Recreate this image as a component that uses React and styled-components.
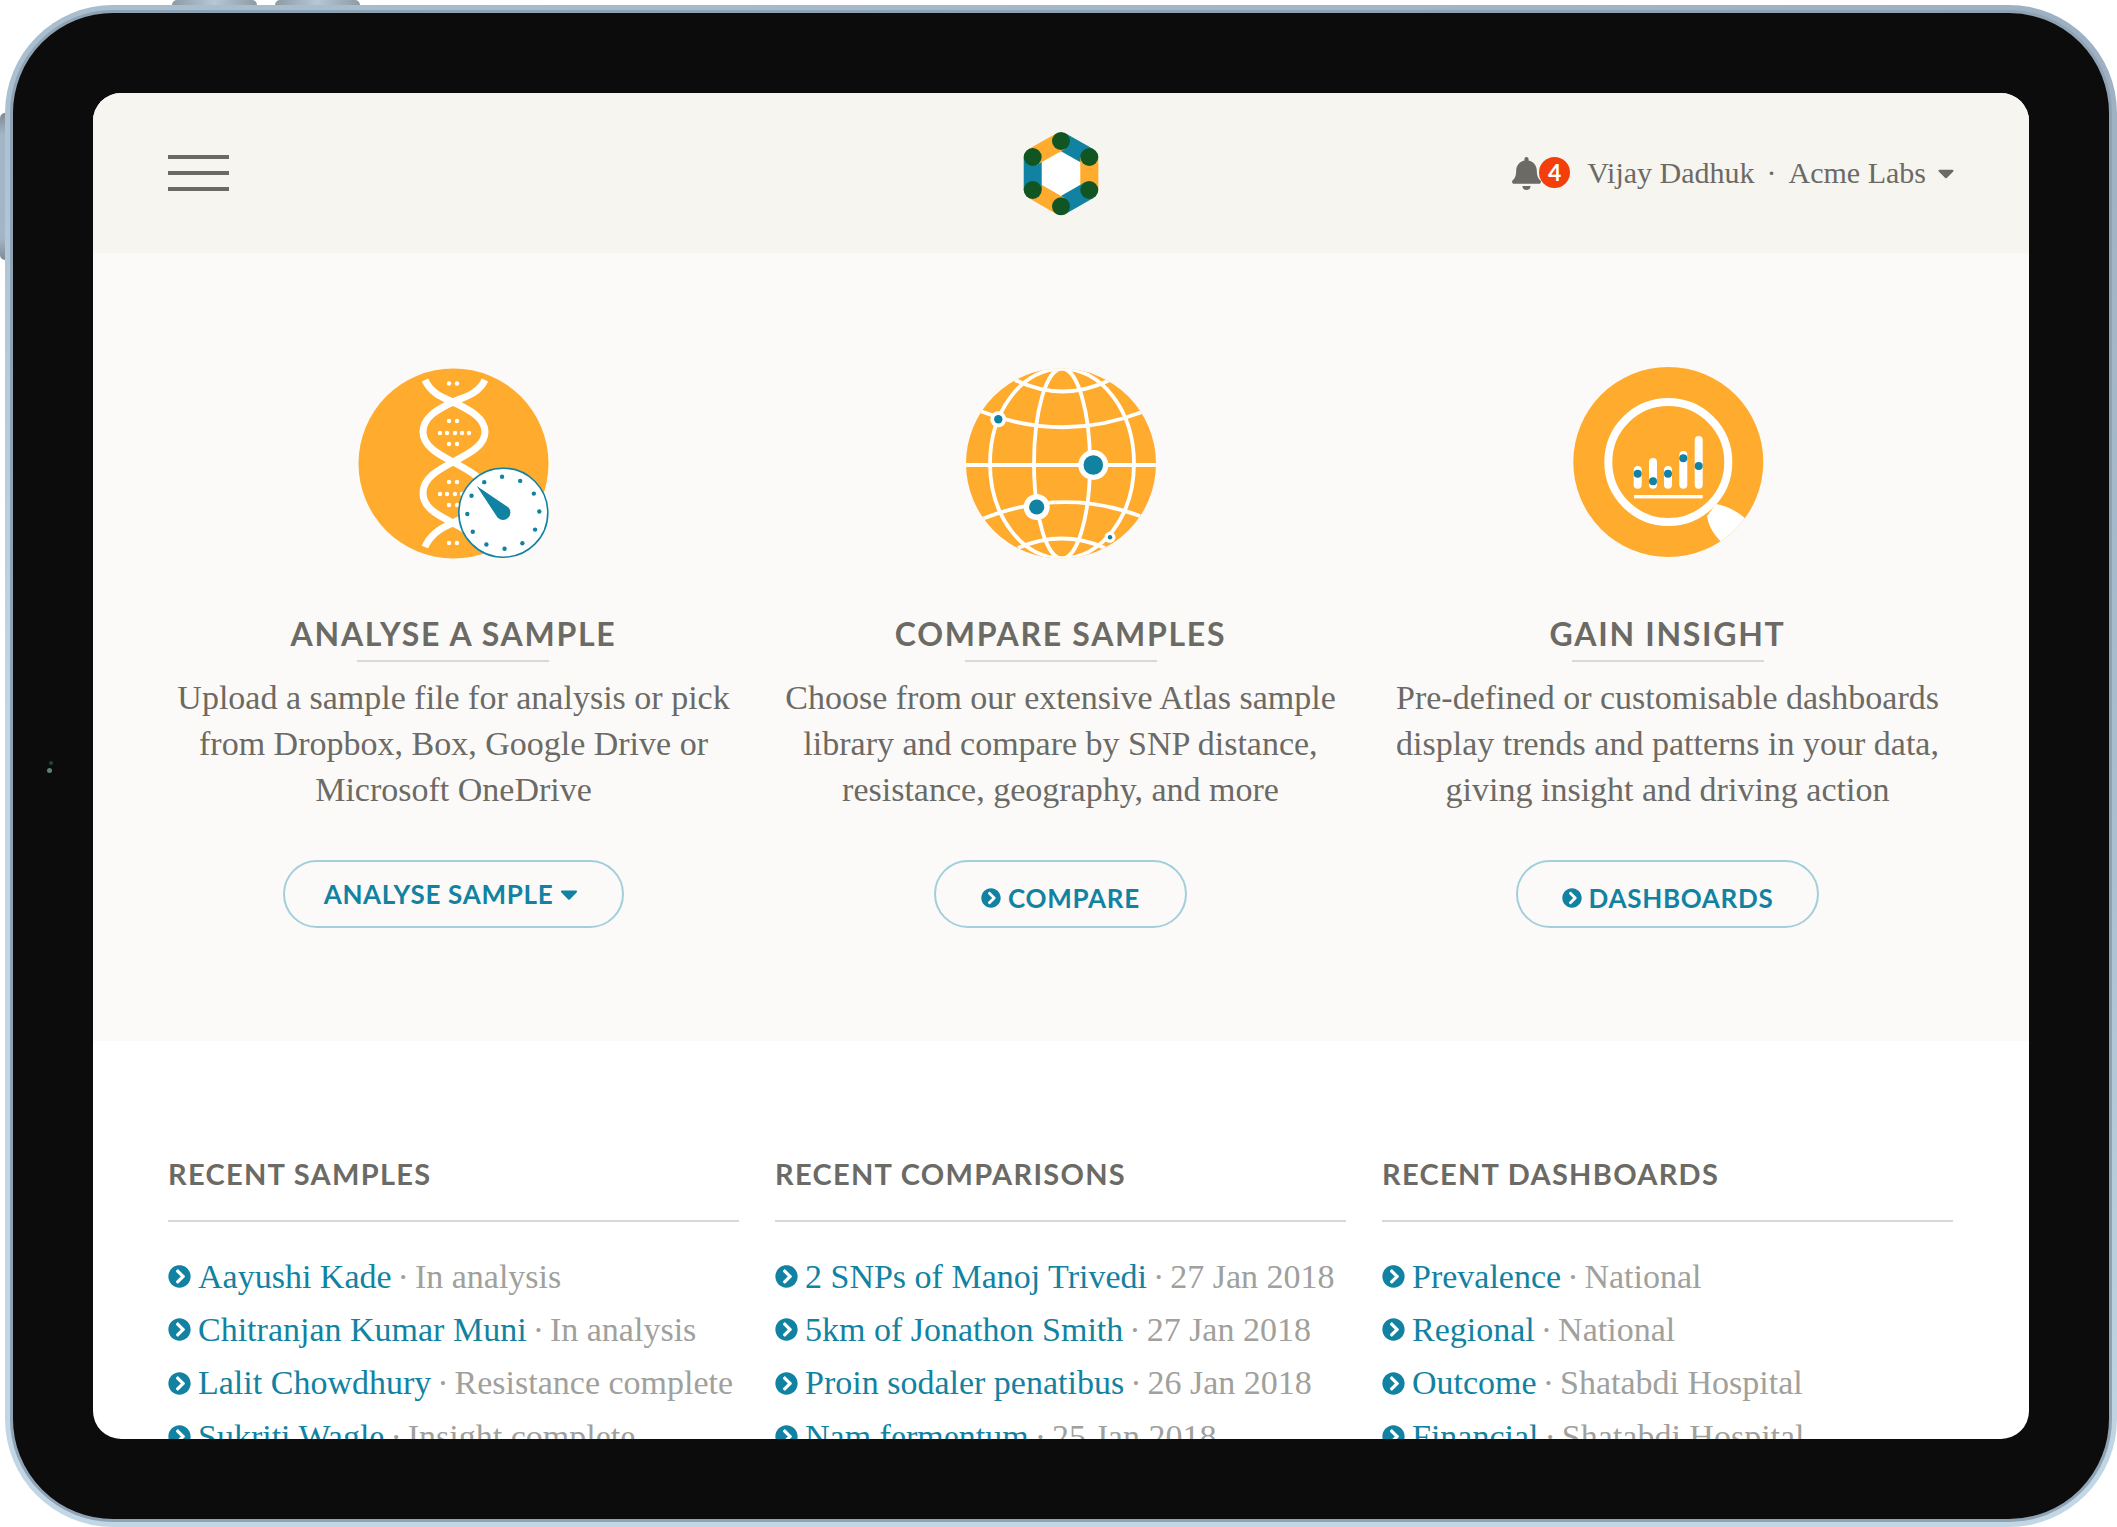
import React from 'react'
import styled, { createGlobalStyle } from 'styled-components'
import { FaBell, FaCaretDown, FaChevronCircleRight } from 'react-icons/fa'

const TEAL = '#1282a2'
const ORANGE = '#ffab2e'
const GREEN = '#115622'

const GlobalStyle = createGlobalStyle`
    html, body {
        margin: 0;
        padding: 0;
        background: #fff;
    }
    body {
        width: 2117px;
        height: 1527px;
        overflow: hidden;
        font-family: 'Liberation Serif', serif;
        color: #6b6a65;
    }
`

const Stage = styled.div`
    position: relative;
    width: 2117px;
    height: 1527px;
    padding: 5px 0 0 5px;
    box-sizing: border-box;
`
const TopKey = styled.div`
    position: absolute;
    top: 0;
    left: ${props => props.left}px;
    width: 85px;
    height: 6px;
    border-radius: 5px 5px 0 0;
    background: linear-gradient(90deg, #8d9aa5, #b5c8d4 50%, #8d9aa5);
`
const SideKey = styled.div`
    position: absolute;
    left: 0;
    top: 113px;
    width: 6px;
    height: 147px;
    border-radius: 5px 0 0 5px;
    background: linear-gradient(180deg, #7f8a92, #a3b6c6 15%, #a3b6c6 85%, #7f8a92);
`
const Frame = styled.div`
    position: relative;
    width: 2112px;
    height: 1522px;
    box-sizing: border-box;
    padding: 5px;
    border-radius: 108px;
    background: linear-gradient(200deg, #9db0c2 0%, #a9bfd0 35%, #c2d7e5 65%, #c2d7e5 100%);
`
const Bezel = styled.div`
    width: 100%;
    height: 100%;
    box-sizing: border-box;
    padding: 80px;
    border: 3px solid #8fa3b5;
    border-radius: 103px;
    background: #0c0c0c;
`
const CameraSpeck = styled.span`
    position: absolute;
    left: ${props => props.left}px;
    top: ${props => props.top}px;
    width: ${props => props.size}px;
    height: ${props => props.size}px;
    border-radius: 50%;
    background: ${props => props.color};
`
const Screen = styled.div`
    height: 100%;
    overflow: hidden;
    border-radius: 28px;
    background: #fff;
`
const Header = styled.header`
    height: 160px;
    padding: 0 75px;
    display: grid;
    grid-template-columns: 1fr auto 1fr;
    align-items: center;
    background: #f6f5f0;
`
const Burger = styled.div`
    width: 61px;
    display: flex;
    flex-direction: column;
    gap: 12px;
`
const BurgerBar = styled.span`
    display: block;
    height: 4px;
    background: #6b6a65;
`
const UserArea = styled.div`
    display: flex;
    align-items: center;
    justify-content: flex-end;
    font-size: 30px;
`
const BellWrap = styled.div`
    position: relative;
    width: 60px;
    height: 36px;
    margin-right: 17px;
    color: #6b6a65;
    font-size: 33px;
    display: flex;
    align-items: center;
`
const Badge = styled.span`
    position: absolute;
    right: 0;
    top: 2px;
    width: 31px;
    height: 31px;
    border-radius: 50%;
    background: #f43f0c;
    color: #fff;
    font: 700 23px/31px 'Lato', sans-serif;
    text-align: center;
`
const Sep = styled.span`
    margin: 0 12px;
`
const Caret = styled.span`
    display: flex;
    margin: 0 -5px 0 7px;
    font-size: 26px;
    color: #6b6a65;
`
const Hero = styled.section`
    height: 788px;
    box-sizing: border-box;
    padding: 115px 75px 0;
    display: grid;
    grid-template-columns: repeat(3, 571px);
    gap: 36px;
    background: #fbfaf8;
`
const Feature = styled.div`
    display: flex;
    flex-direction: column;
    align-items: center;
    text-align: center;
`
const IconSlot = styled.div`
    width: 200px;
    height: 200px;
    margin-bottom: 46px;
    svg {
        display: block;
        overflow: visible;
    }
`
const FeatureTitle = styled.h2`
    margin: 0;
    padding-bottom: 8px;
    font: 700 32px/40px 'Lato', sans-serif;
    letter-spacing: 1.7px;
    color: #6b6a65;
    position: relative;
    &::after {
        content: '';
        position: absolute;
        left: 50%;
        bottom: 0;
        width: 192px;
        height: 2px;
        margin-left: -96px;
        background: #d9d8d3;
    }
`
const FeatureText = styled.p`
    margin: 13px 0 47px;
    font-size: 34px;
    line-height: 46px;
    white-space: nowrap;
    color: #6b6a65;
`
const PillButton = styled.a`
    height: 68px;
    box-sizing: border-box;
    padding: ${props => (props.low ? '8px' : '0')} ${props => props.pad}px 0;
    display: inline-flex;
    align-items: center;
    justify-content: center;
    gap: ${props => (props.low ? 7 : 2)}px;
    border: 2px solid #a3cfdd;
    border-radius: 34px;
    color: ${TEAL};
    font: 700 26px/30px 'Lato', sans-serif;
    letter-spacing: 0.7px;
    svg {
        flex: none;
    }
`
const Recent = styled.section`
    padding: 113px 75px 0;
    display: grid;
    grid-template-columns: repeat(3, 571px);
    gap: 36px;
`
const RecentTitle = styled.h3`
    margin: 0 0 28px;
    padding-bottom: 26px;
    border-bottom: 2px solid #d9d8d3;
    font: 700 29px/40px 'Lato', sans-serif;
    letter-spacing: 1.3px;
    color: #6b6a65;
`
const RecentList = styled.ul`
    margin: 0;
    padding: 0;
    list-style: none;
`
const RecentItem = styled.li`
    height: 53.3px;
    display: flex;
    align-items: center;
    font-size: 34px;
    white-space: nowrap;
    color: #a0a09c;
`
const ItemIcon = styled.span`
    display: flex;
    margin-right: 7px;
    font-size: 23px;
    color: ${TEAL};
`
const ItemLink = styled.a`
    color: ${TEAL};
`
const ItemDot = styled.span`
    margin: 0 6px;
`

const nodes = [
    [100, 40],
    [128.3, 56],
    [128.3, 89],
    [100, 105.3],
    [71.7, 89],
    [71.7, 56],
]

function Logo() {
    return (
        <svg width='80' height='88' viewBox='60 28 80 88'>
            <polygon points={nodes.map(n => n.join(',')).join(' ')} fill='#fff' />
            {nodes.map((n, i) => {
                const next = nodes[(i + 1) % 6]
                return (
                    <line
                        key={i}
                        x1={n[0]}
                        y1={n[1]}
                        x2={next[0]}
                        y2={next[1]}
                        stroke={i % 2 === 0 ? TEAL : ORANGE}
                        strokeWidth='18'
                    />
                )
            })}
            {nodes.map((n, i) => (
                <circle key={i} cx={n[0]} cy={n[1]} r='9' fill={GREEN} />
            ))}
        </svg>
    )
}

const dnaDots = [
    [33.5, [109, 117]],
    [71, [109, 117]],
    [83, [100, 107, 115, 122, 129]],
    [94, [109, 117]],
    [132, [109, 117]],
    [144, [100, 107, 115, 122, 129]],
    [155, [109, 117]],
    [193, [109, 117]],
]

function DnaIcon() {
    return (
        <svg width='240' height='240' viewBox='0 0 240 240' style={{ margin: '-18.5px 0 0 -13.5px' }}>
            <circle cx='113.5' cy='113.5' r='95' fill={ORANGE} />
            <g fill='none' stroke='#fff' strokeWidth='7'>
                <path d='M85 30 C92 45 105 48 113 52 C130 60 145 68 145 82 C145 96 128 104 113 112 C98 120 83 128 83 143 C83 158 98 165 113 173 C128 181 136 185 141 197' />
                <path d='M145 30 C138 45 121 48 113 52 C96 60 83 68 83 82 C83 96 98 104 113 112 C128 120 145 128 145 143 C145 158 128 165 113 173 C100 178 90 185 85 197' />
            </g>
            {dnaDots.map(([y, xs]) =>
                xs.map(x => <circle key={`${x}-${y}`} cx={x} cy={y} r='2.2' fill='#fff' />)
            )}
            <circle cx='163.3' cy='162.7' r='44.5' fill='#fff' stroke={TEAL} strokeWidth='1.6' />
            {Array.from({ length: 12 }).map((_, i) => {
                const a = ((i * 30 - 92) * Math.PI) / 180
                return (
                    <circle
                        key={i}
                        cx={163.3 + 36 * Math.cos(a)}
                        cy={162.7 + 36 * Math.sin(a)}
                        r='2.2'
                        fill={TEAL}
                    />
                )
            })}
            <path
                d='M136.7 136 L168.5 157.5 A7.3 7.3 0 1 1 157.5 167.5 Z'
                fill={TEAL}
            />
        </svg>
    )
}

function GlobeIcon() {
    return (
        <svg width='220' height='220' viewBox='0 0 220 220' style={{ margin: '-18.5px 0 0 -11px' }}>
            <defs>
                <clipPath id='globe-clip'>
                    <circle cx='111' cy='113.5' r='95' />
                </clipPath>
            </defs>
            <circle cx='111' cy='113.5' r='95' fill={ORANGE} />
            <g clipPath='url(#globe-clip)' fill='none' stroke='#fff' strokeWidth='3.8'>
                <line x1='16' y1='115' x2='206' y2='115' />
                <ellipse cx='112' cy='113.5' rx='28' ry='95' />
                <ellipse cx='112' cy='113.5' rx='72' ry='95' />
                <path d='M65 30 Q112 53 160 30' />
                <path d='M30 61 Q112 93 192 62' />
                <path d='M32 169 Q112 137 190 166' />
                <path d='M68 198 Q112 179 155 198' />
            </g>
            <circle cx='48.3' cy='69.3' r='8' fill='#fff' />
            <circle cx='48.3' cy='69.3' r='4.2' fill={TEAL} />
            <circle cx='143.3' cy='115' r='15' fill='#fff' />
            <circle cx='143.3' cy='115' r='9.8' fill={TEAL} />
            <circle cx='86.7' cy='157' r='13' fill='#fff' />
            <circle cx='86.7' cy='157' r='7.6' fill={TEAL} />
            <circle cx='160' cy='187.3' r='5.5' fill='#fff' />
            <circle cx='160' cy='187.3' r='2.2' fill={TEAL} />
        </svg>
    )
}

const bars = [
    { x: 77.7, top: 115, dot: 122.7 },
    { x: 93, top: 107, dot: 130.3 },
    { x: 108, top: 115, dot: 122.7 },
    { x: 123.3, top: 100, dot: 107.3 },
    { x: 138.7, top: 85, dot: 115 },
]

function InsightIcon() {
    return (
        <svg width='220' height='220' viewBox='0 0 220 220' style={{ margin: '-17.5px 0 0 -8px' }}>
            <defs>
                <clipPath id='insight-clip'>
                    <circle cx='108.3' cy='111' r='95' />
                </clipPath>
            </defs>
            <circle cx='108.3' cy='111' r='95' fill={ORANGE} />
            <circle cx='108.3' cy='111' r='60' fill='none' stroke='#fff' strokeWidth='8' />
            <path
                clipPath='url(#insight-clip)'
                d='M156 153 C167 155 177 160 186 168 L162 192 C154 183 149 177 147 165 Z'
                fill='#fff'
            />
            {bars.map(b => (
                <rect key={b.x} x={b.x - 4} y={b.top} width='8' height={137.7 - b.top} rx='4' fill='#fff' />
            ))}
            <rect x='74' y='144' width='68.7' height='3.4' fill='#fff' />
            {bars.map(b => (
                <circle key={b.x} cx={b.x} cy={b.dot} r='4' fill={TEAL} />
            ))}
        </svg>
    )
}

const features = [
    {
        icon: <DnaIcon />,
        title: 'ANALYSE A SAMPLE',
        lines: ['Upload a sample file for analysis or pick', 'from Dropbox, Box, Google Drive or', 'Microsoft OneDrive'],
        button: 'ANALYSE SAMPLE',
        pad: 39,
        caret: true,
    },
    {
        icon: <GlobeIcon />,
        title: 'COMPARE SAMPLES',
        lines: ['Choose from our extensive Atlas sample', 'library and compare by SNP distance,', 'resistance, geography, and more'],
        button: 'COMPARE',
        pad: 45,
    },
    {
        icon: <InsightIcon />,
        title: 'GAIN INSIGHT',
        lines: ['Pre-defined or customisable dashboards', 'display trends and patterns in your data,', 'giving insight and driving action'],
        button: 'DASHBOARDS',
        pad: 44,
    },
]

const recent = [
    {
        title: 'RECENT SAMPLES',
        items: [
            ['Aayushi Kade', 'In analysis'],
            ['Chitranjan Kumar Muni', 'In analysis'],
            ['Lalit Chowdhury', 'Resistance complete'],
            ['Sukriti Wagle', 'Insight complete'],
        ],
    },
    {
        title: 'RECENT COMPARISONS',
        items: [
            ['2 SNPs of Manoj Trivedi', '27 Jan 2018'],
            ['5km of Jonathon Smith', '27 Jan 2018'],
            ['Proin sodaler penatibus', '26 Jan 2018'],
            ['Nam fermentum', '25 Jan 2018'],
        ],
    },
    {
        title: 'RECENT DASHBOARDS',
        items: [
            ['Prevalence', 'National'],
            ['Regional', 'National'],
            ['Outcome', 'Shatabdi Hospital'],
            ['Financial', 'Shatabdi Hospital'],
        ],
    },
]

export default function App() {
    return (
        <>
            <GlobalStyle />
            <Stage>
                <TopKey left={172} />
                <TopKey left={275} />
                <SideKey />
                <Frame>
                    <Bezel>
                        <CameraSpeck left={44} top={756} size={4} color='#1e4a2c' />
                        <CameraSpeck left={42} top={763} size={5} color='#5f7f78' />
                        <Screen>
                            <Header>
                                <Burger>
                                    <BurgerBar />
                                    <BurgerBar />
                                    <BurgerBar />
                                </Burger>
                                <Logo />
                                <UserArea>
                                    <BellWrap>
                                        <FaBell />
                                        <Badge>4</Badge>
                                    </BellWrap>
                                    Vijay Dadhuk
                                    <Sep>·</Sep>
                                    Acme Labs
                                    <Caret>
                                        <FaCaretDown />
                                    </Caret>
                                </UserArea>
                            </Header>
                            <Hero>
                                {features.map(f => (
                                    <Feature key={f.title}>
                                        <IconSlot>{f.icon}</IconSlot>
                                        <FeatureTitle>{f.title}</FeatureTitle>
                                        <FeatureText>
                                            {f.lines.map(l => (
                                                <React.Fragment key={l}>
                                                    {l}
                                                    <br />
                                                </React.Fragment>
                                            ))}
                                        </FeatureText>
                                        <PillButton pad={f.pad} low={!f.caret}>
                                            {!f.caret && <FaChevronCircleRight size={20} />}
                                            {f.button}
                                            {f.caret && <FaCaretDown size={28} />}
                                        </PillButton>
                                    </Feature>
                                ))}
                            </Hero>
                            <Recent>
                                {recent.map(group => (
                                    <div key={group.title}>
                                        <RecentTitle>{group.title}</RecentTitle>
                                        <RecentList>
                                            {group.items.map(([name, note]) => (
                                                <RecentItem key={name}>
                                                    <ItemIcon>
                                                        <FaChevronCircleRight />
                                                    </ItemIcon>
                                                    <ItemLink>{name}</ItemLink>
                                                    <ItemDot>·</ItemDot>
                                                    {note}
                                                </RecentItem>
                                            ))}
                                        </RecentList>
                                    </div>
                                ))}
                            </Recent>
                        </Screen>
                    </Bezel>
                </Frame>
            </Stage>
        </>
    )
}
